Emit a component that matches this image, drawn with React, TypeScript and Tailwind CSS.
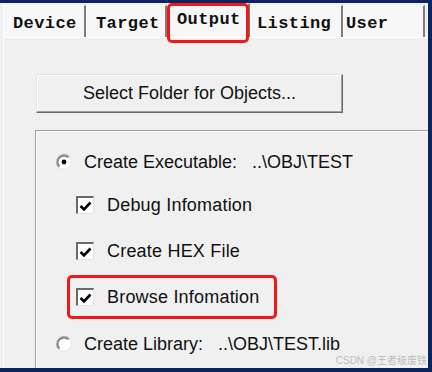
import React from 'react';

const ui = { fontFamily: '"Liberation Sans", Arial, sans-serif' };
const mono = { fontFamily: '"Liberation Mono", "Courier New", monospace' };

function Radio({ checked }: { checked?: boolean }) {
  return (
    <svg width="16" height="16" viewBox="0 0 16 16" className="shrink-0">
      <circle cx="8" cy="8" r="7.5" fill="#fff" />
      <path d="M2.7 13.3 A7.5 7.5 0 0 1 13.3 2.7" fill="none" stroke="#a0a0a0" strokeWidth="1.2" />
      <path d="M3.6 12.4 A6.2 6.2 0 0 1 12.4 3.6" fill="none" stroke="#696969" strokeWidth="1.2" />
      <path d="M13.3 2.7 A7.5 7.5 0 0 1 2.7 13.3" fill="none" stroke="#e6e6e6" strokeWidth="1.2" />
      {checked && <circle cx="8" cy="8" r="2.4" fill="#000" />}
    </svg>
  );
}

function Check() {
  return (
    <div className="w-[18px] h-[18px] shrink-0 bg-white border-t-2 border-l-2 border-[#6a6a6a] border-r border-b border-r-[#e3e3e3] border-b-[#e3e3e3] flex items-center justify-center">
      <svg width="13" height="12" viewBox="0 0 13 12">
        <path d="M1.5 6 L5 9.5 L11.5 2.5" fill="none" stroke="#000" strokeWidth="2.6" />
      </svg>
    </div>
  );
}

function Tab({ label, w, pl, active }: { label: string; w: string; pl: string; active?: boolean }) {
  return (
    <div
      className={`relative flex items-center border-l border-t border-white border-r-2 border-r-[#7c7c7c] bg-[#f7f7f7] ${w} ${pl} ${
        active ? 'h-[34px] pb-[3px]' : 'h-[32px] pt-[3px]'
      }`}>
      <span className="text-[17px] font-bold text-[#111] leading-none tracking-[0.4px]" style={mono}>
        {label}
      </span>
      {active && (
        <div className="absolute -top-[1px] -bottom-[6px] -left-[1px] -right-[1px] z-10 rounded-[5px] border-[3px] border-[#f21818]"></div>
      )}
    </div>
  );
}

export default function App() {
  return (
    <div className="w-[432px] h-[372px] bg-[#0c2461] pt-[3px] pr-[4px] pb-[4px] overflow-hidden">
      <div className="relative h-full bg-[#f0f0f0] flex flex-col overflow-hidden" style={ui}>
        {/* Tabs */}
        <div className="flex items-end h-[34px] pl-[3px]">
          <Tab label="Device" w="w-[83px]" pl="pl-[9px]" />
          <Tab label="Target" w="w-[81px]" pl="pl-[9px]" />
          <Tab label="Output" w="w-[83px]" pl="pl-[9px]" active />
          <Tab label="Listing" w="w-[93px]" pl="pl-[6px]" />
          <Tab label="User" w="w-[82px]" pl="pl-[2px]" />
        </div>

        {/* Panel */}
        <div className="flex-1 ml-[3px] border-l border-t border-white flex flex-col text-[18px] text-[#111]">
          <button className="mt-[36px] ml-[32px] w-[307px] h-[39px] bg-[#f0f0f0] border border-t-[#e3e3e3] border-l-[#e3e3e3] border-r-[#696969] border-b-[#696969] shadow-[inset_-1px_-1px_0_#a0a0a0,inset_1px_1px_0_#fff] flex items-center justify-center text-[18px] text-[#111]">
            Select Folder for Objects...
          </button>

          {/* Group box */}
          <div className="flex-1 mt-[17px] ml-[31px] border-t border-l border-[#a0a0a0] shadow-[inset_1px_1px_0_#fff] flex flex-col">
            <div className="mt-[21px] pl-[20px] h-[20px] flex items-center gap-[12px]">
              <Radio checked />
              <span className="whitespace-pre">Create Executable:   ..\OBJ\TEST</span>
            </div>
            <div className="mt-[23px] pl-[40px] h-[20px] flex items-center gap-[13px]">
              <Check />
              <span className="tracking-[0.2px]">Debug Infomation</span>
            </div>
            <div className="mt-[26px] pl-[40px] h-[20px] flex items-center gap-[13px]">
              <Check />
              <span className="tracking-[0.2px]">Create HEX File</span>
            </div>
            <div className="mt-[14px] ml-[31px] w-[210px] h-[44px] rounded-[5px] border-[3px] border-[#f21818] pl-[6px] pt-[9px]">
              <div className="h-[20px] flex items-center gap-[13px]">
                <Check />
                <span className="tracking-[0.2px]">Browse Infomation</span>
              </div>
            </div>
            <div className="mt-[15px] pl-[20px] h-[20px] flex items-center gap-[12px]">
              <Radio />
              <span className="whitespace-pre">Create Library:   ..\OBJ\TEST.lib</span>
            </div>
          </div>
        </div>

        {/* watermark */}
        <span
          className="absolute right-[1px] bottom-[2px] text-[10px] leading-none text-[#bdbdbd] whitespace-nowrap"
          style={{ fontFamily: '"Liberation Sans", "Noto Sans CJK SC", sans-serif' }}>
          CSDN @王者级废铁
        </span>
      </div>
    </div>
  );
}
